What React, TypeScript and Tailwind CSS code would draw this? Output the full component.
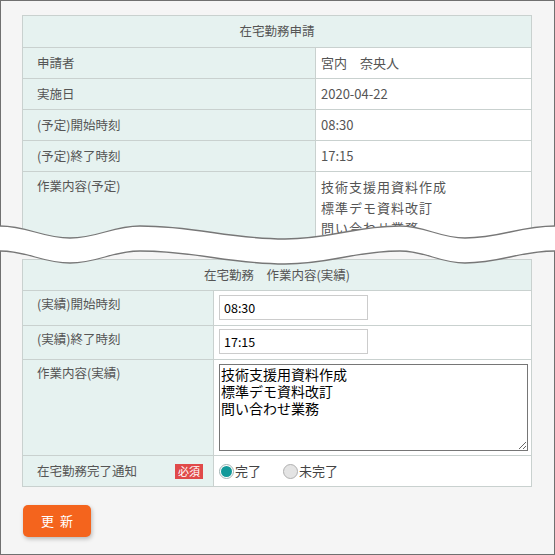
import React from 'react';

// extremes of the torn edge: [x, y]
const PTS: [number, number][] = [
  [0, 8], [70, 20], [140, 8], [285, 21], [400, 8], [465, 20], [555, 8],
];

function segs(pts: [number, number][], dy: number) {
  let d = '';
  for (let i = 1; i < pts.length; i++) {
    const [x0, y0] = pts[i - 1];
    const [x1, y1] = pts[i];
    const k = (x1 - x0) * 0.4;
    d += ` C${x0 + k},${y0 + dy} ${x1 - k},${y1 + dy} ${x1},${y1 + dy}`;
  }
  return d;
}

const TOP = `M${PTS[0][0]},${PTS[0][1]}` + segs(PTS, 0);
const REV = [...PTS].reverse();
const BOTTOM = `M${PTS[0][0]},${PTS[0][1] + 25}` + segs(PTS, 25);
const BAND = TOP + ` L${REV[0][0]},${REV[0][1] + 25}` + segs(REV, 25) + ' Z';

function Radio({ checked, label }: { checked?: boolean; label: string }) {
    return (
        <label className="flex items-center gap-[1px]">
            {checked ? (
                <span className="w-[15px] h-[15px] rounded-full border border-[#9fb3b3] bg-white flex items-center justify-center">
                    <span className="w-[11px] h-[11px] rounded-full bg-[#11999a]" />
                </span>
            ) : (
                <span className="w-[15px] h-[15px] rounded-full border border-[#b0b0b0] bg-[#e4e4e4]" />
            )}
            <span className="text-[13px] text-[#444]">{label}</span>
        </label>
    );
}

export default function App() {
    const th = 'border border-[#c9d1cf] bg-[#e6f2f0] text-center font-normal';
    const lbl = 'border border-[#c9d1cf] bg-[#e6f2f0] pl-[14px] text-left';
    const val = 'border border-[#c9d1cf] bg-white pl-[5px]';

    return (
        <div className="relative w-[555px] h-[555px] border border-[#707070] bg-[#f5f5f5] pl-[21px] pt-[14px] text-[#555] font-['Noto_Sans_CJK_JP',sans-serif]">
            {/* 申請 (cut off by the wave) */}
            <div className="w-[510px] h-[232px] overflow-hidden">
                <table className="w-[510px] border-collapse table-fixed text-[12.5px]">
                    <colgroup>
                        <col className="w-[293px]" />
                        <col />
                    </colgroup>
                    <tbody>
                        <tr className="h-[32px]">
                            <th colSpan={2} className={th}>在宅勤務申請</th>
                        </tr>
                        <tr className="h-[31px]">
                            <td className={lbl}>申請者</td>
                            <td className={val + ' text-[13px]'}>宮内　奈央人</td>
                        </tr>
                        <tr className="h-[31px]">
                            <td className={lbl}>実施日</td>
                            <td className={val + ' text-[13px]'}>2020-04-22</td>
                        </tr>
                        <tr className="h-[31px]">
                            <td className={lbl}>(予定)開始時刻</td>
                            <td className={val + ' text-[13px]'}>08:30</td>
                        </tr>
                        <tr className="h-[31px]">
                            <td className={lbl}>(予定)終了時刻</td>
                            <td className={val + ' text-[13px]'}>17:15</td>
                        </tr>
                        <tr>
                            <td className={lbl + ' align-top pt-[5px]'}>作業内容(予定)</td>
                            <td className={val + ' align-top pt-[5px] text-[13px] tracking-[1px] leading-[20.5px]'}>
                                技術支援用資料作成<br />標準デモ資料改訂<br />問い合わせ業務<br />&nbsp;
                            </td>
                        </tr>
                    </tbody>
                </table>
            </div>

            {/* 実績 */}
            <table className="mt-[12px] w-[510px] border-collapse table-fixed text-[12.5px]">
                <colgroup>
                    <col className="w-[191px]" />
                    <col />
                </colgroup>
                <tbody>
                    <tr className="h-[31px]">
                        <th colSpan={2} className={th}>在宅勤務　作業内容(実績)</th>
                    </tr>
                    <tr className="h-[35px]">
                        <td className={lbl + ' align-top pt-[4px]'}>(実績)開始時刻</td>
                        <td className={val + ' align-top pt-[4px]'}>
                            <input
                                defaultValue="08:30"
                                className="w-[149px] h-[25px] border border-[#cccccc] bg-white px-[4px] text-[12.5px] text-black outline-none"
                            />
                        </td>
                    </tr>
                    <tr className="h-[34px]">
                        <td className={lbl + ' align-top pt-[4px]'}>(実績)終了時刻</td>
                        <td className={val + ' align-top pt-[3px]'}>
                            <input
                                defaultValue="17:15"
                                className="w-[149px] h-[25px] border border-[#cccccc] bg-white px-[4px] text-[12.5px] text-black outline-none"
                            />
                        </td>
                    </tr>
                    <tr className="h-[96px]">
                        <td className={lbl + ' align-top pt-[4px]'}>作業内容(実績)</td>
                        <td className={val + ' align-top pt-[4px]'}>
                            <textarea
                                defaultValue={'技術支援用資料作成\n標準デモ資料改訂\n問い合わせ業務'}
                                className="block w-[309px] h-[87px] border border-[#767676] bg-white px-[1px] py-[1px] text-[14px] leading-[17px] text-black outline-none"
                            />
                        </td>
                    </tr>
                    <tr className="h-[31px]">
                        <td className={lbl + ' pr-[10px]'}>
                            <div className="flex items-center justify-between">
                                <span>在宅勤務完了通知</span>
                                <span className="bg-[#e04a4a] text-white text-[11px] leading-[15px] px-[3px]">必須</span>
                            </div>
                        </td>
                        <td className={val}>
                            <div className="flex items-center gap-[22px]">
                                <Radio checked label="完了" />
                                <Radio label="未完了" />
                            </div>
                        </td>
                    </tr>
                </tbody>
            </table>

            <button className="mt-[18px] ml-[1px] w-[68px] h-[32px] rounded-[5px] bg-[#f4641d] text-white text-[13px] tracking-[6px] pl-[6px] shadow-[1px_2px_4px_rgba(0,0,0,0.25)]">
                更新
            </button>

            {/* torn-page wave */}
            <svg
                className="absolute -left-px top-[217px]"
                width="555"
                height="50"
                viewBox="0 0 555 50"
            >
                <path d={BAND} fill="#ffffff" />
                <path d={TOP} fill="none" stroke="#777" strokeWidth="1.3" />
                <path d={BOTTOM} fill="none" stroke="#777" strokeWidth="1.3" />
            </svg>
        </div>
    );
}
